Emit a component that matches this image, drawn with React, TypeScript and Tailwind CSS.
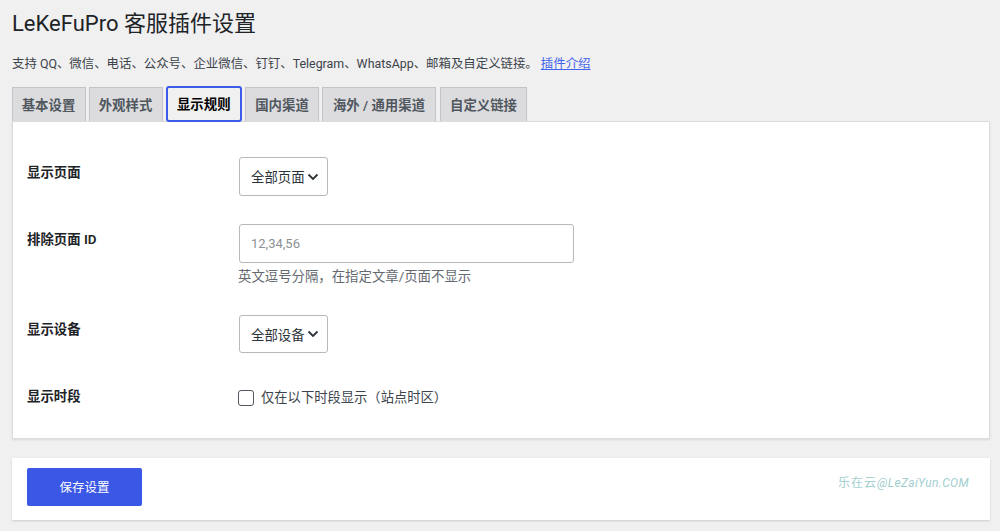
const font = "font-['Roboto','Noto_Sans_CJK_SC',sans-serif]";

const tabs = [
  { label: "基本设置", width: "w-[74px]" },
  { label: "外观样式", width: "w-[74px]" },
  { label: "显示规则", width: "w-[76.5px]" },
  { label: "国内渠道", width: "w-[74px]" },
  { label: "海外 / 通用渠道", width: "w-[114px]" },
  { label: "自定义链接", width: "ml-[1px] w-[87px]" },
];

function Chevron() {
  return (
    <svg width="12" height="8" viewBox="0 0 12 8" fill="none" className="ml-[2px] shrink-0">
      <path d="M1.5 1.5 L6 6 L10.5 1.5" stroke="#2c3338" strokeWidth="1.8" />
    </svg>
  );
}

function FakeSelect({ label, className }: { label: string; className: string }) {
  return (
    <div className={`flex w-[89px] items-center rounded-[3px] border border-[#b4b9be] bg-white pl-[11px] text-[13.4px] text-[#2c3338] ${className}`}>
      <span className="pt-[4px]">{label}</span>
      <Chevron />
    </div>
  );
}

function Row({ label, className, labelClass, children }: { label: string; className: string; labelClass: string; children: React.ReactNode }) {
  return (
    <div className={`flex ${className}`}>
      <div className={`w-[212px] shrink-0 text-[13.4px] leading-[20px] font-semibold text-[#1d2327] ${labelClass}`}>{label}</div>
      <div>{children}</div>
    </div>
  );
}

export default function App() {
  return (
    <div className={`${font} h-[531px] w-[1000px] overflow-hidden bg-[#f0f0f1] px-[12px] pt-[9px] text-[#2c3338]`}>
      <h1 className="text-[22px] leading-[30px] font-normal text-[#1d2327]">LeKeFuPro 客服插件设置</h1>
      <p className="mt-[15px] text-[12.42px] leading-[20px] text-[#3c434a]">
        支持 QQ、微信、电话、公众号、企业微信、钉钉、Telegram、WhatsApp、邮箱及自定义链接。 <a href="#" className="text-[#4263eb] underline">插件介绍</a>
      </p>

      {/* Tabs */}
      <div className="mt-[13px] -ml-[0.5px] flex h-[34px] items-stretch gap-[3px]">
        {tabs.map((tab, i) =>
          i === 2 ? (
            <div
              key={tab.label}
              className={`relative z-10 -mt-[1px] flex h-[36px] items-center justify-center rounded-[3px] border-2 border-[#3d5ae8] bg-[#f0f0f1] pt-[2px] text-[13.4px] font-semibold text-[#000000] ${tab.width}`}
            >
              {tab.label}
            </div>
          ) : (
            <div
              key={tab.label}
              className={`flex items-center justify-center border border-b-0 border-[#c3c4c7] bg-[#dcdcde] pt-[3px] text-[13.4px] font-semibold whitespace-pre text-[#50575e] ${tab.width}`}
            >
              {tab.label}
            </div>
          )
        )}
      </div>

      {/* Settings panel */}
      <div className="h-[318px] w-[978px] border border-[#dcdcde] bg-white pt-[35px] pr-[15px] pl-[14px] shadow-[0_1px_2px_rgba(0,0,0,0.1)]">
        <Row label="显示页面" className="h-[67px]" labelClass="pt-[6px]">
          <FakeSelect label="全部页面" className="h-[39px]" />
        </Row>
        <Row label="排除页面 ID" className="h-[91px]" labelClass="pt-[6px]">
          <input
            placeholder="12,34,56"
            className="h-[39px] w-[335px] rounded-[3px] border border-[#b4b9be] bg-white px-[11px] text-[13px] placeholder:text-[#8c8f94]"
          />
          <p className="mt-[4px] -ml-[1px] text-[13.4px] leading-[20px] text-[#646970]">英文逗号分隔，在指定文章/页面不显示</p>
        </Row>
        <Row label="显示设备" className="h-[71px]" labelClass="pt-[5px]">
          <FakeSelect label="全部设备" className="h-[38px]" />
        </Row>
        <Row label="显示时段" className="" labelClass="pt-[1px]">
          <label className="mt-[2px] -ml-[1px] flex items-center text-[13.3px] leading-[20px] text-[#3c434a]">
            <span className="mr-[7px] h-[16px] w-[16px] rounded-[3px] border border-[#50575e] bg-white" />
            仅在以下时段显示（站点时区）
          </label>
        </Row>
      </div>

      {/* Save bar */}
      <div className="mt-[19px] flex h-[62px] w-[978px] items-center justify-between bg-white pr-[21px] pb-[4px] pl-[15px] shadow-[0_1px_2px_rgba(0,0,0,0.15)]">
        <button className="h-[38px] w-[115px] rounded-[2px] bg-[#3b57e6] pt-[2px] text-[12.5px] text-white">保存设置</button>
        <span className="mb-[8px] text-[12px] text-[#a3cfcf]">
          <span className="tracking-[1px]">乐在云</span>
          <span className="tracking-[0.35px] italic">@LeZaiYun.COM</span>
        </span>
      </div>
    </div>
  );
}
